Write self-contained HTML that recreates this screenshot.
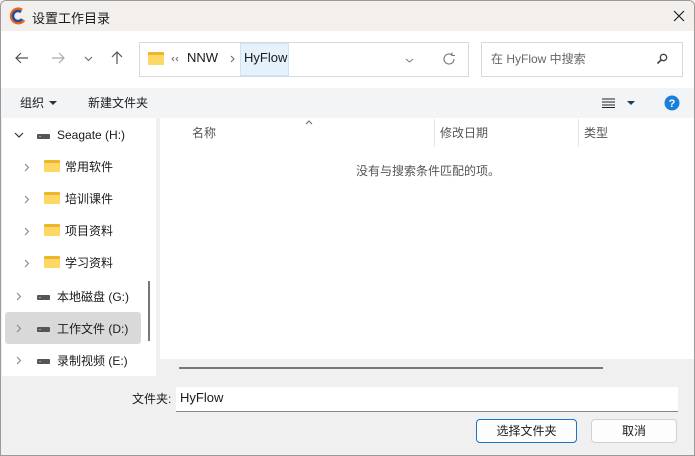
<!DOCTYPE html>
<html><head><meta charset="utf-8"><style>
*{margin:0;padding:0;box-sizing:border-box}
body{width:695px;height:456px;overflow:hidden;font-family:"Liberation Sans","Noto Sans CJK SC",sans-serif;font-size:12px;color:#1a1a1a;background:#f0f0f0;position:relative}
.a{position:absolute}
.win{left:0;top:0;width:695px;height:456px;border:1px solid #9a9a9a;border-radius:6px 6px 0 0;overflow:hidden;background:#f0f0f0}
.t{white-space:nowrap}
.fold{width:16px;height:12px;background:#fcd867;border-radius:1px;border-top:3px solid #f0b429}
.drive{width:13px;height:5px;background:#555;border-radius:1px}
.drive::after{content:"";position:absolute;left:2px;top:2px;width:2px;height:1px;background:#6c6}
</style></head><body>
<div class="a win">
 <div class="a" style="left:0;top:0;width:695px;height:30px;background:#f3efec"></div>
 <svg class="a" style="left:8px;top:6px" width="18" height="18" viewBox="0 0 18 18"><path d="M13 3A7 7 0 1 0 15 13" stroke="#e8651c" stroke-width="3" fill="none"/><path d="M12 5A5 5 0 1 0 13 12" stroke="#1d4fa0" stroke-width="2.5" fill="none"/></svg>
 <div class="a t" style="left:31px;top:7px;font-size:13px">设置工作目录</div>
 <svg class="a" style="left:672px;top:9px" width="12" height="12"><path d="M1 1L11 11M11 1L1 11" stroke="#222" stroke-width="1.2"/></svg>
 <div class="a" style="left:0;top:30px;width:695px;height:57px;background:#fff"></div>
 <svg class="a" style="left:14px;top:51px" width="14" height="12"><path d="M13 6H1M6 1L1 6L6 11" stroke="#555" stroke-width="1.2" fill="none"/></svg>
 <svg class="a" style="left:50px;top:51px" width="14" height="12"><path d="M1 6H13M8 1L13 6L8 11" stroke="#aaa" stroke-width="1.2" fill="none"/></svg>
 <svg class="a" style="left:83px;top:55px" width="9" height="6"><path d="M1 1L4.5 4.5L8 1" stroke="#666" stroke-width="1.1" fill="none"/></svg>
 <svg class="a" style="left:110px;top:50px" width="12" height="14"><path d="M6 13V1M1 6L6 1L11 6" stroke="#555" stroke-width="1.2" fill="none"/></svg>
 <div class="a" style="left:138px;top:41px;width:330px;height:35px;border:1px solid #d9d9d9;background:#fff"></div>
 <div class="a fold" style="left:147px;top:51px;width:16px;height:13px"></div>
 <svg class="a" style="left:170px;top:55px" width="8" height="6"><path d="M3 1L1 3L3 5M7 1L5 3L7 5" stroke="#777" fill="none"/></svg>
 <div class="a t" style="left:186px;top:49px;font-size:13px">NNW</div>
 <svg class="a" style="left:229px;top:54px" width="5" height="8"><path d="M1 1L4 4L1 7" stroke="#666" fill="none"/></svg>
 <div class="a" style="left:239px;top:42px;width:49px;height:33px;background:#e5f1fb;border:1px solid #cce4f7"></div>
 <div class="a t" style="left:243px;top:49px;font-size:13px">HyFlow</div>
 <svg class="a" style="left:404px;top:57px" width="9" height="5"><path d="M1 1L4.5 4L8 1" stroke="#777" fill="none"/></svg>
 <svg class="a" style="left:441px;top:51px" width="14" height="14"><path d="M12 7A5 5 0 1 1 10 3M10 0.5V3.5H13" stroke="#777" stroke-width="1.1" fill="none"/></svg>
 <div class="a" style="left:480px;top:41px;width:202px;height:35px;border:1px solid #d9d9d9;background:#fff"></div>
 <div class="a t" style="left:490px;top:49px;color:#666">在 HyFlow 中搜索</div>
 <svg class="a" style="left:655px;top:52px" width="12" height="12"><circle cx="7.5" cy="4.5" r="3.2" stroke="#444" stroke-width="1.3" fill="none"/><path d="M5 7L1.5 10.5" stroke="#444" stroke-width="1.6"/></svg>
 <div class="a" style="left:0;top:87px;width:695px;height:30px;background:#f3f4f6"></div>
 <div class="a t" style="left:19px;top:93px">组织</div>
 <svg class="a" style="left:48px;top:100px" width="8" height="5"><path d="M0 0H8L4 4Z" fill="#333"/></svg>
 <div class="a t" style="left:87px;top:93px">新建文件夹</div>
 <svg class="a" style="left:601px;top:97px" width="13" height="10"><path d="M0 1H13M0 4H13M0 7H13M0 9.5H13" stroke="#222" stroke-width="1"/></svg>
 <svg class="a" style="left:626px;top:100px" width="8" height="5"><path d="M0 0H8L4 4Z" fill="#1f3a60"/></svg>
 <svg class="a" style="left:663px;top:94px" width="16" height="16"><circle cx="8" cy="8" r="7.5" fill="#1a7fd8"/><text x="8" y="12" font-size="11" font-weight="bold" fill="#fff" text-anchor="middle" font-family="Liberation Sans">?</text></svg>
 <div class="a" style="left:1px;top:117px;width:154px;height:258px;background:#fff"></div>
 <div class="a" style="left:147px;top:280px;width:2px;height:60px;background:#777"></div>
 <div class="a" style="left:4px;top:311px;width:136px;height:32px;background:#d9d9d9;border-radius:3px"></div>
 <svg class="a" style="left:13px;top:131px" width="10" height="6"><path d="M1 1L5 5L9 1" stroke="#333" stroke-width="1.2" fill="none"/></svg>
 <div class="a drive" style="left:36px;top:133px"></div>
 <div class="a t" style="left:56px;top:127px">Seagate (H:)</div>
 <svg class="a" style="left:23px;top:162px" width="6" height="9"><path d="M1 1L4.5 4.5L1 8" stroke="#888" stroke-width="1.1" fill="none"/></svg><div class="a fold" style="left:43px;top:159px"></div><div class="a t" style="left:64px;top:157px">常用软件</div>
 <svg class="a" style="left:23px;top:194px" width="6" height="9"><path d="M1 1L4.5 4.5L1 8" stroke="#888" stroke-width="1.1" fill="none"/></svg><div class="a fold" style="left:43px;top:191px"></div><div class="a t" style="left:64px;top:189px">培训课件</div>
 <svg class="a" style="left:23px;top:226px" width="6" height="9"><path d="M1 1L4.5 4.5L1 8" stroke="#888" stroke-width="1.1" fill="none"/></svg><div class="a fold" style="left:43px;top:223px"></div><div class="a t" style="left:64px;top:221px">项目资料</div>
 <svg class="a" style="left:23px;top:258px" width="6" height="9"><path d="M1 1L4.5 4.5L1 8" stroke="#888" stroke-width="1.1" fill="none"/></svg><div class="a fold" style="left:43px;top:255px"></div><div class="a t" style="left:64px;top:253px">学习资料</div>
 <svg class="a" style="left:15px;top:291px" width="6" height="9"><path d="M1 1L4.5 4.5L1 8" stroke="#888" stroke-width="1.1" fill="none"/></svg><div class="a drive" style="left:36px;top:294px"></div><div class="a t" style="left:56px;top:287px">本地磁盘 (G:)</div>
 <svg class="a" style="left:15px;top:323px" width="6" height="9"><path d="M1 1L4.5 4.5L1 8" stroke="#888" stroke-width="1.1" fill="none"/></svg><div class="a drive" style="left:36px;top:326px"></div><div class="a t" style="left:56px;top:319px">工作文件 (D:)</div>
 <svg class="a" style="left:15px;top:355px" width="6" height="9"><path d="M1 1L4.5 4.5L1 8" stroke="#888" stroke-width="1.1" fill="none"/></svg><div class="a drive" style="left:36px;top:358px"></div><div class="a t" style="left:56px;top:351px">录制视频 (E:)</div>
 <div class="a" style="left:159px;top:117px;width:535px;height:258px;background:#fff"></div>
 <div class="a" style="left:159px;top:358px;width:535px;height:17px;background:#f0f0f0"></div>
 <div class="a" style="left:178px;top:366px;width:424px;height:2px;background:#777"></div>
 <svg class="a" style="left:304px;top:119px" width="8" height="5"><path d="M1 4L4 1L7 4" stroke="#666" fill="none"/></svg>
 <div class="a t" style="left:191px;top:123px;color:#555">名称</div>
 <div class="a" style="left:433px;top:118px;width:1px;height:28px;background:#e5e5e5"></div>
 <div class="a t" style="left:439px;top:123px;color:#555">修改日期</div>
 <div class="a" style="left:577px;top:118px;width:1px;height:28px;background:#e5e5e5"></div>
 <div class="a t" style="left:583px;top:123px;color:#555">类型</div>
 <div class="a t" style="left:355px;top:161px;color:#555">没有与搜索条件匹配的项。</div>
 <div class="a t" style="left:131px;top:389px">文件夹:</div>
 <div class="a" style="left:175px;top:386px;width:502px;height:25px;background:#fff;border-bottom:1px solid #888"></div>
 <div class="a t" style="left:179px;top:389px;font-size:13px">HyFlow</div>
 <div class="a" style="left:475px;top:418px;width:101px;height:24px;background:#fdfdfd;border:1px solid #1a74c9;border-radius:4px;text-align:center;line-height:22px">选择文件夹</div>
 <div class="a" style="left:590px;top:418px;width:86px;height:24px;background:#fdfdfd;border:1px solid #d0d0d0;border-radius:4px;text-align:center;line-height:22px">取消</div>
</div>
</body></html>
